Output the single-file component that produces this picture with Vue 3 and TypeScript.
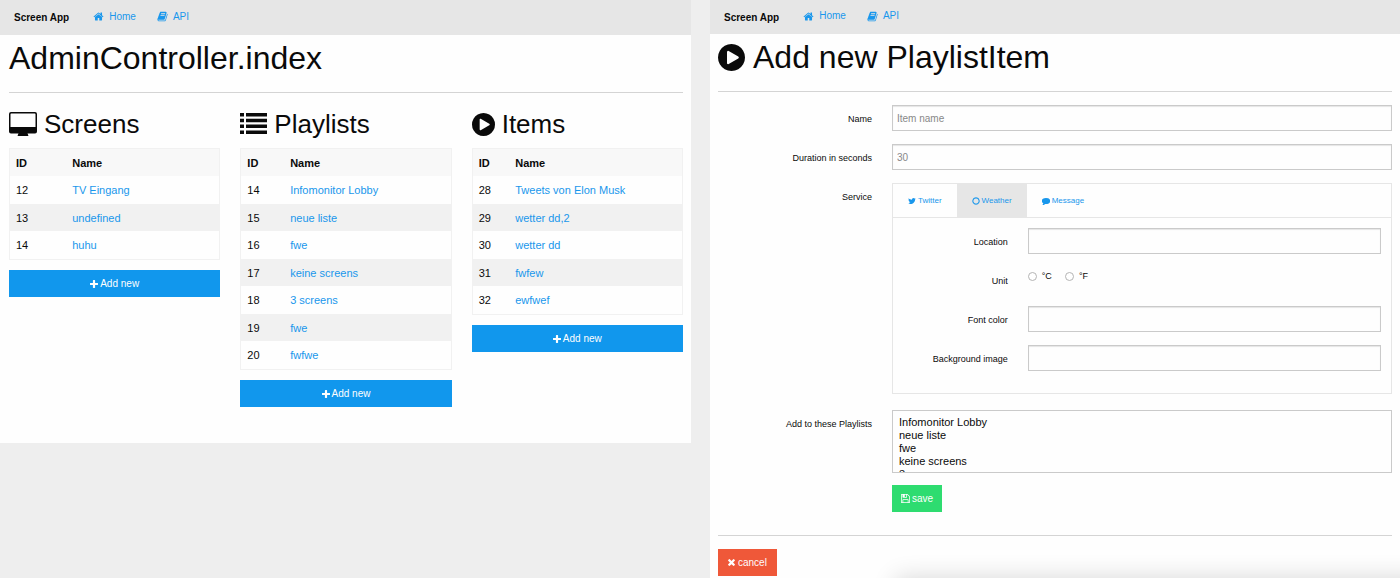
<script setup lang="ts">
import { ref } from 'vue'

interface Row {
  id: number
  name: string
}
interface Section {
  title: string
  icon: 'desktop' | 'list' | 'play'
  rows: Row[]
}

const playlists: Row[] = [
  { id: 14, name: 'Infomonitor Lobby' },
  { id: 15, name: 'neue liste' },
  { id: 16, name: 'fwe' },
  { id: 17, name: 'keine screens' },
  { id: 18, name: '3 screens' },
  { id: 19, name: 'fwe' },
  { id: 20, name: 'fwfwe' },
]

const sections: Section[] = [
  {
    title: 'Screens',
    icon: 'desktop',
    rows: [
      { id: 12, name: 'TV Eingang' },
      { id: 13, name: 'undefined' },
      { id: 14, name: 'huhu' },
    ],
  },
  { title: 'Playlists', icon: 'list', rows: playlists },
  {
    title: 'Items',
    icon: 'play',
    rows: [
      { id: 28, name: 'Tweets von Elon Musk' },
      { id: 29, name: 'wetter dd,2' },
      { id: 30, name: 'wetter dd' },
      { id: 31, name: 'fwfew' },
      { id: 32, name: 'ewfwef' },
    ],
  },
]

const paths = {
  home: 'M1472 992v480q0 26-19 45t-45 19h-384v-384h-256v384h-384q-26 0-45-19t-19-45v-480q0-1 .5-3t.5-3l575-474 575 474q1 2 1 6zm223-69l-62 74q-8 9-21 11h-3q-13 0-21-7l-692-577-692 577q-12 8-24 7-13-2-21-11l-62-74q-8-10-7-23.5t11-21.5l719-599q32-26 76-26t76 26l244 204v-195q0-14 9-23t23-9h192q14 0 23 9t9 23v408l219 182q10 8 11 21.5t-7 23.5z',
  book: 'M1703 478q40 57 18 129l-275 906q-19 64-76.5 107.5t-122.5 43.5h-923q-77 0-148.5-53.5t-99.5-131.5q-24-67-2-127 0-4 3-27t4-37q1-8-3-21.5t-3-19.5q2-11 8-21t16.5-23.5 16.5-23.5q23-38 45-91.5t30-91.5q3-10 .5-30t-.5-28q3-11 17-28t17-23q21-36 42-92t25-90q1-9-2.5-32t.5-28q4-13 22-30.5t22-22.5q19-26 42.5-84.5t27.5-96.5q1-8-3-25.5t-2-26.5q2-8 9-18t18-23 17-21q8-12 16.5-30.5t15-35 16-36 19.5-32 26.5-23.5 36-11.5 47.5 5.5l-1 3q38-9 51-9h761q74 0 114 56t18 130l-274 906q-36 119-71.5 153.5t-128.5 34.5h-869q-27 0-38 15-11 16-1 43 24 70 144 70h923q29 0 56-15.5t35-41.5l300-987q7-22 5-57 38 15 59 43zm-1064 2q-4 13 2 22.5t20 9.5h608q13 0 25.5-9.5t16.5-22.5l21-64q4-13-2-22.5t-20-9.5h-608q-13 0-25.5 9.5t-16.5 22.5zm-83 256q-4 13 2 22.5t20 9.5h608q13 0 25.5-9.5t16.5-22.5l21-64q4-13-2-22.5t-20-9.5h-608q-13 0-25.5 9.5t-16.5 22.5z',
  play: 'M896 128q209 0 385.5 103t279.5 279.5 103 385.5-103 385.5-279.5 279.5-385.5 103-385.5-103-279.5-279.5-103-385.5 103-385.5 279.5-279.5 385.5-103zm384 823q32-18 32-55t-32-55l-544-320q-31-19-64-1-32 19-32 56v640q0 37 32 56 16 8 32 8 17 0 32-9z',
  plus: 'M1600 736v192q0 40-28 68t-68 28h-416v416q0 40-28 68t-68 28h-192q-40 0-68-28t-28-68v-416h-416q-40 0-68-28t-28-68v-192q0-40 28-68t68-28h416v-416q0-40 28-68t68-28h192q40 0 68 28t28 68v416h416q40 0 68 28t28 68z',
  twitter: 'M1684 408q-67 98-162 167 1 14 1 42 0 130-38 259.5t-115.5 248.5-184.5 210.5-258 146-323 54.5q-271 0-496-145 35 4 78 4 225 0 401-138-105-2-188-64.5t-114-159.5q33 5 61 5 43 0 85-11-112-23-185.5-111.5t-73.5-205.5v-4q68 38 146 41-66-44-105-115t-39-154q0-88 44-163 121 149 294.5 238.5t371.5 99.5q-8-38-8-74 0-134 94.5-228.5t228.5-94.5q140 0 236 102 109-21 205-78-37 115-142 178 93-10 186-50z',
  circle: 'M896 352q-148 0-273 73t-198 198-73 273 73 273 198 198 273 73 273-73 198-198 73-273-73-273-198-198-273-73zm768 544q0 209-103 385.5t-279.5 279.5-385.5 103-385.5-103-279.5-279.5-103-385.5 103-385.5 279.5-279.5 385.5-103 385.5 103 279.5 279.5 103 385.5z',
  comment: 'M1792 896q0 174-120 321.5t-326 233-450 85.5q-70 0-145-8-198 175-460 242-49 14-114 22-17 2-30.5-9t-17.5-29v-1q-3-4-.5-12t2-10 4.5-9.5l6-9 7-8.5 8-9q7-8 31-34.5t34.5-38 31-39.5 32.5-51 27-59 26-76q-157-89-247.5-220t-90.5-281q0-130 71-248.5t191-204.5 286-136.5 348-50.5q244 0 450 85.5t326 233 120 321.5z',
  times: 'M1490 1322q0 40-28 68l-136 136q-28 28-68 28t-68-28l-294-294-294 294q-28 28-68 28t-68-28l-136-136q-28-28-28-68t28-68l294-294-294-294q-28-28-28-68t28-68l136-136q28-28 68-28t68 28l294 294 294-294q28-28 68-28t68 28l136 136q28 28 28 68t-28 68l-294 294 294 294q28 28 28 68z',
  save: 'M512 1536h768v-384h-768v384zm896 0h128v-896q0-14-10-38.5t-20-34.5l-281-281q-10-10-34-20t-39-10v416q0 40-28 68t-68 28h-576q-40 0-68-28t-28-68v-416h-128v1280h128v-416q0-40 28-68t68-28h832q40 0 68 28t28 68v416zm-384-928v-320q0-13-9.5-22.5t-22.5-9.5h-192q-13 0-22.5 9.5t-9.5 22.5v320q0 13 9.5 22.5t22.5 9.5h192q13 0 22.5-9.5t9.5-22.5zm640 32v928q0 40-28 68t-68 28h-1344q-40 0-68-28t-28-68v-1344q0-40 28-68t68-28h928q40 0 88 20t76 48l280 280q28 28 48 76t20 88z',
}

const services = [
  { label: 'Twitter', path: paths.twitter },
  { label: 'Weather', path: paths.circle },
  { label: 'Message', path: paths.comment },
]
const activeService = ref('Weather')

const itemName = ref('')
const duration = ref('')
const location = ref('')
const unit = ref('')
const fontColor = ref('')
const background = ref('')
const chosen = ref<number[]>([])
</script>

<template>
  <div class="page">
    <section class="pane admin">
      <nav class="nav">
        <strong class="brand">Screen App</strong>
        <a href="#"><svg class="icon" viewBox="0 0 1792 1792"><path :d="paths.home" /></svg>Home</a>
        <a href="#"><svg class="icon" viewBox="0 0 1792 1792"><path :d="paths.book" /></svg>API</a>
      </nav>
      <div class="body">
        <h1>AdminController.index</h1>
        <hr />
        <div class="columns">
          <section v-for="s in sections" :key="s.title">
            <h2>
              <svg v-if="s.icon === 'desktop'" class="desktop" viewBox="0 0 28 26">
                <path
                  fill-rule="evenodd"
                  d="M2 0h24a2 2 0 0 1 2 2v17.6a2 2 0 0 1-2 2h-7.500l.8 1.600v.8H8.700v-.8l.8-1.600H2a2 2 0 0 1-2-2V2a2 2 0 0 1 2-2zM2.200 1.500a.7.7 0 0 0-.7.7v12.800h25v-12.800a.7.7 0 0 0-.7-.7z"
                />
              </svg>
              <svg v-else-if="s.icon === 'list'" class="list" viewBox="0 0 27 23">
                <path
                  d="M0 0h4v3.5H0zM6 0h21v3.5H6zM0 5.8h4v3.5H0zM6 5.8h21v3.5H6zM0 11.6h4v3.5H0zM6 11.6h21v3.5H6zM0 17.4h4v3.5H0zM6 17.4h21v3.5H6z"
                />
              </svg>
              <svg v-else class="play" viewBox="128 128 1536 1536"><path :d="paths.play" /></svg>
              <span>{{ s.title }}</span>
            </h2>
            <table>
              <thead>
                <tr>
                  <th scope="col">ID</th>
                  <th scope="col">Name</th>
                </tr>
              </thead>
              <tbody>
                <tr v-for="r in s.rows" :key="r.id">
                  <td>{{ r.id }}</td>
                  <td><a href="#">{{ r.name }}</a></td>
                </tr>
              </tbody>
            </table>
            <button type="button" class="btn add">
              <svg class="icon" viewBox="192 128 1408 1408"><path :d="paths.plus" /></svg>Add new
            </button>
          </section>
        </div>
      </div>
    </section>

    <section class="pane editor">
      <nav class="nav">
        <strong class="brand">Screen App</strong>
        <a href="#"><svg class="icon" viewBox="0 0 1792 1792"><path :d="paths.home" /></svg>Home</a>
        <a href="#"><svg class="icon" viewBox="0 0 1792 1792"><path :d="paths.book" /></svg>API</a>
      </nav>
      <div class="body">
        <h1>
          <svg class="play" viewBox="128 128 1536 1536"><path :d="paths.play" /></svg>
          <span>Add new PlaylistItem</span>
        </h1>
        <hr />
        <form @submit.prevent>
          <div class="field">
            <label for="item-name">Name</label>
            <input id="item-name" v-model="itemName" type="text" class="text" placeholder="Item name" />
          </div>
          <div class="field">
            <label for="duration">Duration in seconds</label>
            <input id="duration" v-model="duration" type="text" class="text" placeholder="30" />
          </div>
          <div class="field">
            <span id="service-label" class="label">Service</span>
            <div class="service">
              <div class="tabs" role="tablist" aria-labelledby="service-label">
                <button
                  v-for="t in services"
                  :key="t.label"
                  type="button"
                  role="tab"
                  :aria-selected="activeService === t.label"
                  :class="{ active: activeService === t.label }"
                  @click="activeService = t.label"
                >
                  <svg class="icon" viewBox="64 64 1664 1664"><path :d="t.path" /></svg>{{ t.label }}
                </button>
              </div>
              <div class="panel">
                <div class="field">
                  <label for="location">Location</label>
                  <input id="location" v-model="location" type="text" class="text" />
                </div>
                <div class="field">
                  <span id="unit-label" class="label">Unit</span>
                  <div class="radios" role="radiogroup" aria-labelledby="unit-label">
                    <label><input v-model="unit" type="radio" name="unit" value="c" />°C</label>
                    <label><input v-model="unit" type="radio" name="unit" value="f" />°F</label>
                  </div>
                </div>
                <div class="field">
                  <label for="font-color">Font color</label>
                  <input id="font-color" v-model="fontColor" type="text" class="text" />
                </div>
                <div class="field">
                  <label for="background">Background image</label>
                  <input id="background" v-model="background" type="text" class="text" />
                </div>
              </div>
            </div>
          </div>
          <div class="field lists">
            <label for="playlists">Add to these Playlists</label>
            <div>
              <select id="playlists" v-model="chosen" multiple>
                <option v-for="p in playlists" :key="p.id" :value="p.id">{{ p.name }}</option>
              </select>
              <button type="submit" class="btn save">
                <svg class="icon" viewBox="128 128 1536 1536"><path :d="paths.save" /></svg>save
              </button>
            </div>
          </div>
        </form>
        <hr class="end" />
        <button type="button" class="btn cancel">
          <svg class="icon" viewBox="302 346 1188 1208"><path :d="paths.times" /></svg>cancel
        </button>
      </div>
    </section>
  </div>
</template>

<style>
body {
  margin: 0;
  background: #eee;
}
</style>

<style scoped>
.page,
.page * {
  box-sizing: border-box;
}
.page {
  display: grid;
  grid-template-columns: 691fr 690fr;
  gap: 19px;
  align-items: start;
  min-height: 100vh;
  font-family: 'Liberation Sans', Arial, sans-serif;
  font-size: 11px;
  color: #0a0a0a;
}
.page button,
.page input,
.page select {
  font-family: inherit;
}
.pane {
  background: #fefefe;
}
.editor {
  position: relative;
  align-self: stretch;
  overflow: hidden;
}
/* soft shadow rising from the bottom edge */
.editor::after {
  content: '';
  position: absolute;
  top: 100%;
  left: 27%;
  right: -40px;
  height: 40px;
  box-shadow: 0 0 24px rgba(0, 0, 0, 0.16);
  pointer-events: none;
}
svg {
  display: block;
  flex: none;
  fill: currentColor;
}
a {
  color: #1997ec;
  text-decoration: none;
}
.nav {
  display: flex;
  align-items: center;
  height: 35px;
  padding: 0 14px;
  background: #e6e6e6;
  font-size: 10px;
}
.editor .nav {
  height: 34px;
}
.nav a {
  display: flex;
  align-items: center;
  gap: 5px;
  margin-left: 21px;
  line-height: 14px;
  padding-bottom: 2px;
}
.brand {
  margin-right: 3px;
}
.nav .icon {
  width: 11px;
  height: 11px;
}
.body {
  padding: 0 8px;
}
.admin .body {
  padding: 0 8px 36px 9px;
}
h1,
h2 {
  display: flex;
  align-items: center;
  margin: 0;
  font-weight: 400;
}
h1 {
  gap: 8px;
  font-size: 32px;
  line-height: 46px;
}
h1 + hr {
  margin-top: 11px;
}
h2 {
  gap: 7px;
  margin: 0 0 5px;
  font-size: 26px;
  line-height: 37px;
}
h1 .play {
  width: 27px;
  height: 27px;
}
h2 .play {
  width: 23px;
  height: 23px;
}
.desktop {
  width: 28px;
  height: 26px;
}
.list {
  width: 27px;
  height: 23px;
}
hr {
  height: 1px;
  margin: 13px 0;
  border: 0;
  background: #d4d4d4;
}
.columns {
  display: grid;
  grid-template-columns: repeat(3, 1fr);
  gap: 20px;
}
table {
  width: 100%;
  border: 1px solid #f1f1f1;
  border-spacing: 0;
}
th,
td {
  height: 28px;
  padding: 0 8px 0 6px;
  text-align: left;
  line-height: 14px;
}
th {
  height: 27px;
  background: #f8f8f8;
}
tbody tr:nth-child(even) td {
  height: 27px;
  background: #f1f1f1;
}
.btn {
  display: flex;
  align-items: center;
  justify-content: center;
  gap: 2px;
  height: 27px;
  padding: 0 10px;
  border: 0;
  font-size: 10px;
  color: #fefefe;
}
.btn .icon {
  width: 8px;
  height: 8px;
}
.add {
  width: 100%;
  margin-top: 10px;
  background: #1197ed;
}
.save {
  margin-top: 12px;
  padding: 0 9px;
  background: #2edc70;
}
.btn.save .icon {
  width: 9px;
  height: 9px;
}
.cancel {
  gap: 3px;
  background: #ef5839;
}
.btn.cancel .icon {
  width: 7px;
  height: 7px;
}
.field {
  display: grid;
  grid-template-columns: 154fr 500fr;
  gap: 20px;
  margin-bottom: 13px;
}
.field > label,
.label {
  font-size: 9px;
  line-height: 28px;
  height: 26px;
  text-align: right;
}
.text {
  width: 100%;
  height: 26px;
  padding: 0 4px;
  border: 1px solid #cacaca;
  border-radius: 0;
  background: #fefefe;
  box-shadow: inset 0 1px 1px rgba(10, 10, 10, 0.1);
  font-size: 10px;
}
.text::placeholder {
  color: #888;
}
.service {
  border: 1px solid #e6e6e6;
}
.tabs {
  display: flex;
  height: 34px;
  border-bottom: 1px solid #e6e6e6;
}
.tabs button {
  display: flex;
  align-items: center;
  gap: 2px;
  padding: 0 15px;
  border: 0;
  background: none;
  font-size: 8px;
  color: #1997ec;
}
.tabs button.active {
  background: #e6e6e6;
}
.tabs .icon {
  width: 8px;
  height: 8px;
}
.panel {
  padding: 10px 10px 9px;
}
.panel .field {
  grid-template-columns: 105fr 354fr;
}
.radios {
  display: flex;
  align-items: center;
  gap: 13px;
  height: 18px;
}
.radios label {
  display: flex;
  align-items: center;
  gap: 5px;
  font-size: 9px;
}
.radios input {
  appearance: none;
  width: 9px;
  height: 9px;
  margin: 0;
  border: 1px solid #b4b4b4;
  border-radius: 50%;
  background: #fff;
}
.radios input:checked {
  border: 3px solid #1997ec;
}
.lists {
  margin: 16px 0 0;
}
select {
  display: block;
  width: 100%;
  height: 63px;
  padding: 5px 4px 0;
  border: 1px solid #cacaca;
  border-radius: 0;
  background: #fefefe;
  font-size: 11px;
  color: #0a0a0a;
  scrollbar-width: none;
}
option {
  min-height: 13px;
  padding: 0 2px;
  line-height: 13px;
}
.end {
  margin-top: 23px;
}
</style>
